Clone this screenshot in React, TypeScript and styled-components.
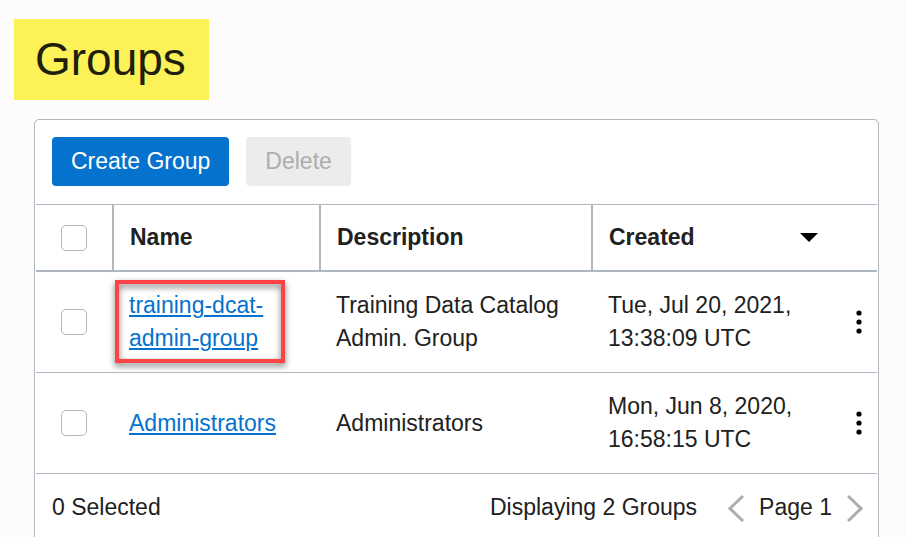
import React, { useState } from "react";
import styled, { createGlobalStyle } from "styled-components";

const line = "#b0b7c0";
const ink = "#212121";

const GlobalStyle = createGlobalStyle`
  *, *::before, *::after { box-sizing: border-box; }
  html { scrollbar-width: none; }
  body {
    margin: 0;
    background: #fcfcfc;
    color: ${ink};
    font-family: "Liberation Sans", Arial, Helvetica, sans-serif;
    font-size: 23px;
    line-height: 33px;
  }
  button, input { font: inherit; color: inherit; }
`;

const Page = styled.main`
  padding: 19px 27px 16px 34px;
`;

const Title = styled.h1`
  width: fit-content;
  margin: 0 0 19px -20px;
  padding: 0 23px 0 21px;
  background: #fdf158;
  color: #201f0d;
  font-size: 46px;
  font-weight: 400;
  line-height: 81px;
`;

const Card = styled.section`
  padding: 0 1px;
  background: #fff;
  border: 1px solid ${line};
  border-radius: 5px;
`;

const Toolbar = styled.div`
  display: flex;
  gap: 17px;
  padding: 17px 16px 18px;
`;

const Button = styled.button<{ $primary?: boolean }>`
  padding: 8px 19px;
  border: 0;
  border-radius: 4px;
  background: ${(p) => (p.$primary ? "#0572ce" : "#ececec")};
  color: ${(p) => (p.$primary ? "#fff" : "#adadad")};
`;

const Table = styled.table`
  width: 100%;
  table-layout: fixed;
  border-collapse: collapse;
`;

const Col = styled.col<{ $width?: number }>`
  width: ${(p) => (p.$width ? `${p.$width}px` : "auto")};
`;

const HeadCell = styled.th<{ $divider?: boolean }>`
  padding: 16px;
  text-align: left;
  border-top: 1px solid ${line};
  border-bottom: 2px solid ${line};
  border-right: ${(p) => (p.$divider ? `2px solid ${line}` : "0")};
`;

const Cell = styled.td`
  padding: 17px 16px;
  border-bottom: 1px solid ${line};
`;

const CheckCell = styled(Cell)`
  padding: 0 2px 0 0;
`;

const CheckHead = styled(HeadCell)`
  padding: 0;
`;

const ActionCell = styled(Cell)`
  padding: 0;
`;

const Checkbox = styled.input`
  display: block;
  appearance: none;
  width: 26px;
  height: 26px;
  margin: 0 auto;
  border: 1px solid ${line};
  border-radius: 5px;
  background: #fff;
  &:checked { background: #0572ce; }
`;

const SortButton = styled.button`
  display: flex;
  width: 100%;
  align-items: center;
  justify-content: space-between;
  padding: 0 7px 0 0;
  border: 0;
  background: none;
  font-weight: 700;
`;

const IconButton = styled.button`
  display: flex;
  align-items: center;
  justify-content: center;
  padding: 0;
  border: 0;
  background: none;
`;

const MenuButton = styled(IconButton)`
  width: 100%;
  height: 33px;
`;

const Highlight = styled.div`
  position: relative;
  &::after {
    content: "";
    position: absolute;
    inset: -9px 19px -8px -14px;
    border: 4px solid #fd4343;
    filter: drop-shadow(0 3px 3px rgba(0, 0, 0, 0.55));
    pointer-events: none;
  }
`;

const Link = styled.a`
  color: #0572ce;
  text-decoration: underline 2px;
  text-underline-offset: 2px;
`;

const Footer = styled.footer`
  display: flex;
  align-items: center;
  justify-content: space-between;
  padding: 17px 14px 17px 16px;
`;

const Paging = styled.div`
  display: flex;
  align-items: center;
`;

const Pager = styled.nav`
  display: flex;
  align-items: center;
  gap: 15px;
  margin-left: 31px;
`;

const SortArrow = () => (
  <svg width="18" height="9" viewBox="0 0 18 9" aria-hidden="true">
    <path d="M0 0H18L9 9Z" fill="#000" />
  </svg>
);

const Dots = () => (
  <svg width="6" height="24" viewBox="0 0 6 24" aria-hidden="true">
    <circle cx="3" cy="3" r="2.6" />
    <circle cx="3" cy="12" r="2.6" />
    <circle cx="3" cy="21" r="2.6" />
  </svg>
);

const Chevron = ({ d }: { d: string }) => (
  <svg width="16" height="28" viewBox="0 0 16 28" fill="none" stroke="#adadad" strokeWidth="3" aria-hidden="true">
    <path d={d} />
  </svg>
);

const groups = [
  {
    name: "training-dcat-admin-group",
    description: "Training Data Catalog Admin. Group",
    created: "Tue, Jul 20, 2021, 13:38:09 UTC",
    highlighted: true,
  },
  {
    name: "Administrators",
    description: "Administrators",
    created: "Mon, Jun 8, 2020, 16:58:15 UTC",
    highlighted: false,
  },
];

export default function App() {
  const [selected, setSelected] = useState<string[]>([]);
  const toggle = (name: string) =>
    setSelected((s) => (s.includes(name) ? s.filter((n) => n !== name) : [...s, name]));
  const all = selected.length === groups.length;

  return (
    <>
      <GlobalStyle />
      <Page>
        <Title>Groups</Title>
        <Card>
          <Toolbar>
            <Button type="button" $primary>Create Group</Button>
            <Button type="button" disabled={selected.length === 0}>Delete</Button>
          </Toolbar>
          <Table>
            <colgroup>
              <Col $width={77} />
              <Col $width={207} />
              <Col $width={272} />
              <Col />
              <Col $width={36} />
            </colgroup>
            <thead>
              <tr>
                <CheckHead $divider>
                  <Checkbox
                    type="checkbox"
                    aria-label="Select all groups"
                    checked={all}
                    onChange={() => setSelected(all ? [] : groups.map((g) => g.name))}
                  />
                </CheckHead>
                <HeadCell scope="col" $divider>Name</HeadCell>
                <HeadCell scope="col" $divider>Description</HeadCell>
                <HeadCell scope="col" aria-sort="descending">
                  <SortButton type="button">Created<SortArrow /></SortButton>
                </HeadCell>
                <HeadCell />
              </tr>
            </thead>
            <tbody>
              {groups.map((g) => (
                <tr key={g.name}>
                  <CheckCell>
                    <Checkbox
                      type="checkbox"
                      aria-label={`Select ${g.name}`}
                      checked={selected.includes(g.name)}
                      onChange={() => toggle(g.name)}
                    />
                  </CheckCell>
                  <Cell>
                    {g.highlighted ? (
                      <Highlight><Link href="#">{g.name}</Link></Highlight>
                    ) : (
                      <Link href="#">{g.name}</Link>
                    )}
                  </Cell>
                  <Cell>{g.description}</Cell>
                  <Cell>{g.created}</Cell>
                  <ActionCell>
                    <MenuButton type="button" aria-label={`Actions for ${g.name}`}><Dots /></MenuButton>
                  </ActionCell>
                </tr>
              ))}
            </tbody>
          </Table>
          <Footer>
            <span>{selected.length} Selected</span>
            <Paging>
              <span>Displaying {groups.length} Groups</span>
              <Pager aria-label="Pagination">
                <IconButton type="button" disabled aria-label="Previous page"><Chevron d="M15 2L2 14.5L15 27" /></IconButton>
                <span>Page 1</span>
                <IconButton type="button" disabled aria-label="Next page"><Chevron d="M1 2L14 14.5L1 27" /></IconButton>
              </Pager>
            </Paging>
          </Footer>
        </Card>
      </Page>
    </>
  );
}
